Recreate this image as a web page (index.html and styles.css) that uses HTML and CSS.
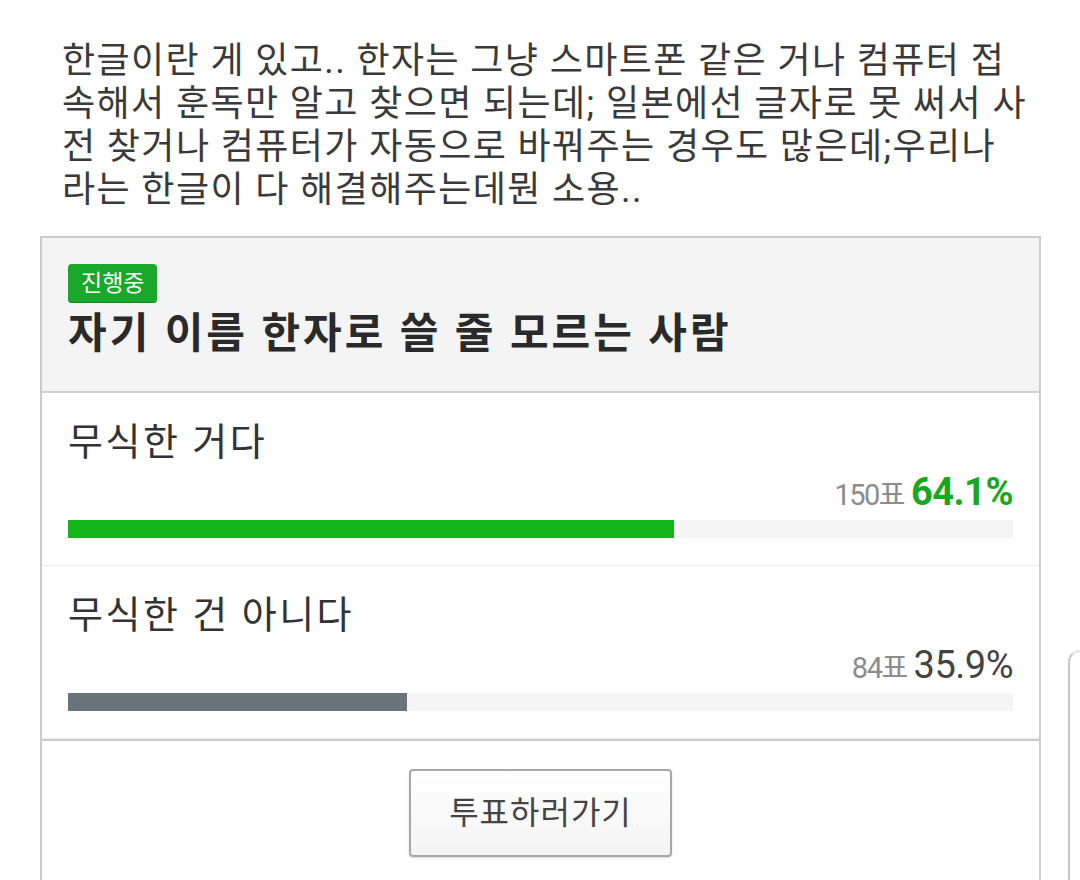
FILE: index.html
```html
<!DOCTYPE html>
<html lang="ko">
<head>
    <meta charset="UTF-8">
    <title>투표</title>
    <link rel="stylesheet" href="styles.css">
</head>
<body>

<p class="post-text">한글이란 게 있고.. 한자는 그냥 스마트폰 같은 거나 컴퓨터 접<br>속해서 훈독만 알고 찾으면 되는데; 일본에선 글자로 못 써서 사<br>전 찾거나 컴퓨터가 자동으로 바꿔주는 경우도 많은데;우리나<br>라는 한글이 다 해결해주는데뭔 소용..</p>

<div class="poll-wrap">
    <div class="poll">
        <div class="poll-head">
            <span class="badge">진행중</span>
            <h2 class="poll-title">자기 이름 한자로 쓸 줄 모르는 사람</h2>
        </div>

        <div class="option">
            <div class="option-label">무식한 거다</div>
            <div class="option-stat">
                <span class="count">150표</span>
                <span class="percent top">64.1%</span>
            </div>
            <div class="bar"><div class="bar-fill green" style="width: 64.1%"></div></div>
        </div>

        <div class="option">
            <div class="option-label">무식한 건 아니다</div>
            <div class="option-stat">
                <span class="count">84표</span>
                <span class="percent">35.9%</span>
            </div>
            <div class="bar"><div class="bar-fill gray" style="width: 35.9%"></div></div>
        </div>

        <div class="poll-foot">
            <a href="#" class="vote-btn">투표하러가기</a>
        </div>
    </div>
    <div class="side-stub"></div>
</div>

</body>
</html>
```

FILE: styles.css
```css
body {
    margin: 0;
    background: #fff;
    color: #333;
    font-family: Roboto, "Noto Sans CJK KR", sans-serif;
    overflow: hidden;
}

/* 본문 */
.post-text {
    margin: 0;
    padding: 40px 0 0 62px;
    font-size: 36px;
    line-height: 43px;
    letter-spacing: 1.4px;
    color: #3a3a3a;
    white-space: nowrap;
}

.poll-wrap {
    display: flex;
    align-items: flex-start;
    gap: 27px;
    margin-top: 24px;
    padding-left: 40px;
}

.poll {
    width: 997px;
    border: 2px solid #cbcbcb;
    border-bottom: 0;
    flex-shrink: 0;
}

/* 헤더 */
.poll-head {
    background: #f4f4f4;
    padding: 26px 26px 26px;
    border-bottom: 2px solid #d0d0d0;
}

.badge {
    display: block;
    width: fit-content;
    height: 39px;
    line-height: 39px;
    padding: 0 13px;
    border-radius: 4px;
    background: #1aa82a;
    box-shadow: inset 0 -1px 0 #148a20;
    color: #fff;
    font-size: 23px;
}

.poll-title {
    margin: 0;
    font-size: 42px;
    line-height: 62px;
    font-weight: bold;
    color: #2a2a2a;
    letter-spacing: 3px;
}

/* 선택지 */
.option {
    padding: 27px 26px 27px;
    border-bottom: 1px solid #ececec;
}

.option-label {
    font-size: 38px;
    line-height: 44px;
    color: #333;
    letter-spacing: 2.5px;
}

.option-stat {
    margin-top: 8px;
    height: 40px;
    line-height: 40px;
    text-align: right;
}

.count {
    font-size: 29px;
    color: #8c8c8c;
    letter-spacing: -1.5px;
}

.percent {
    margin-left: 3px;
    font-size: 38px;
    color: #444;
    letter-spacing: -0.5px;
}

.percent.top {
    font-size: 38px;
    color: #17a821;
    font-weight: bold;
}

.bar {
    height: 18px;
    margin-top: 8px;
    background: #f5f5f5;
}

.bar-fill {
    height: 100%;
}

.bar-fill.green {
    background: #14b41c;
}

.bar-fill.gray {
    background: #68737a;
}

/* 하단 버튼 */
.poll-foot {
    border-top: 2px solid #cbcbcb;
    padding: 28px 0 40px;
    text-align: center;
}

.vote-btn {
    display: inline-block;
    width: 259px;
    height: 84px;
    line-height: 84px;
    border: 2px solid #a8a8a8;
    border-radius: 4px;
    background: linear-gradient(#fff, #f4f4f4);
    box-shadow: 0 1px 2px rgba(0, 0, 0, 0.15);
    color: #444;
    font-size: 32px;
    letter-spacing: 1px;
    text-decoration: none;
}

.side-stub {
    width: 40px;
    height: 300px;
    margin-top: 414px;
    border-left: 2px solid #c8c8c8;
    border-top: 2px solid #e0e0e0;
    border-top-left-radius: 12px;
}
```
